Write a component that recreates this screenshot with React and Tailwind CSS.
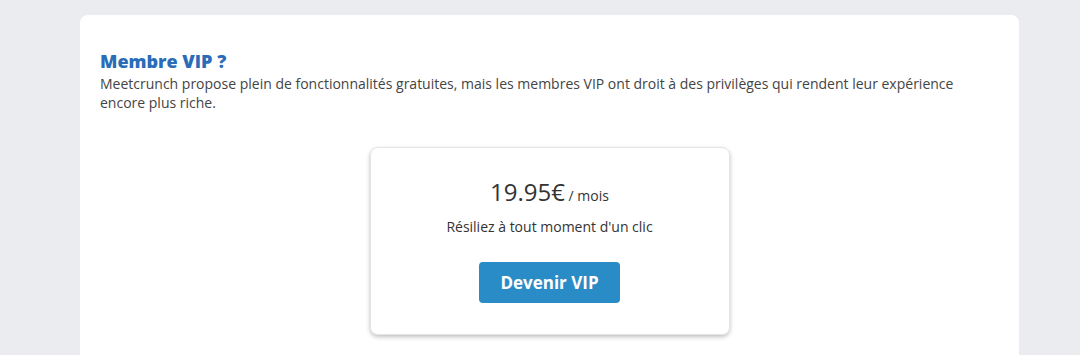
import React from 'react';

export default function App() {
    return (
        <div className="h-[355px] bg-[#ebecf0] pl-[80px] pr-[61px] pt-[15px] overflow-hidden" style={{ fontFamily: '"Open Sans", sans-serif' }}>
            <div className="bg-white rounded-t-[8px] px-[20px] pt-[34px] h-full">
                <h2 className="text-[18px] leading-[24px] font-extrabold text-[#2a6cb8]">Membre VIP ?</h2>
                <p className="text-[14px] leading-[19px] text-[#444] mt-[1px]">
                    Meetcrunch propose plein de fonctionnalités gratuites, mais les membres VIP ont droit à des privilèges qui rendent leur expérience encore plus riche.
                </p>

                {/* Pricing card */}
                <div className="mx-auto mt-[35px] w-[360px] rounded-[8px] border border-[#e4e4e4] shadow-[0_2px_4px_rgba(0,0,0,0.25)] flex flex-col items-center pt-[27px] pb-[31px]">
                    <div className="text-[#333] leading-[34px]">
                        <span className="text-[24px]">19.95€</span>
                        <span className="text-[14px]"> / mois</span>
                    </div>
                    <div className="text-[14px] leading-[18px] text-[#333] mt-[5px]">Résiliez à tout moment d'un clic</div>
                    <button className="mt-[26px] w-[141px] h-[41px] rounded-[4px] bg-[#2a8cc6] text-white text-[17px] font-bold">
                        Devenir VIP
                    </button>
                </div>
            </div>
        </div>
    );
}
